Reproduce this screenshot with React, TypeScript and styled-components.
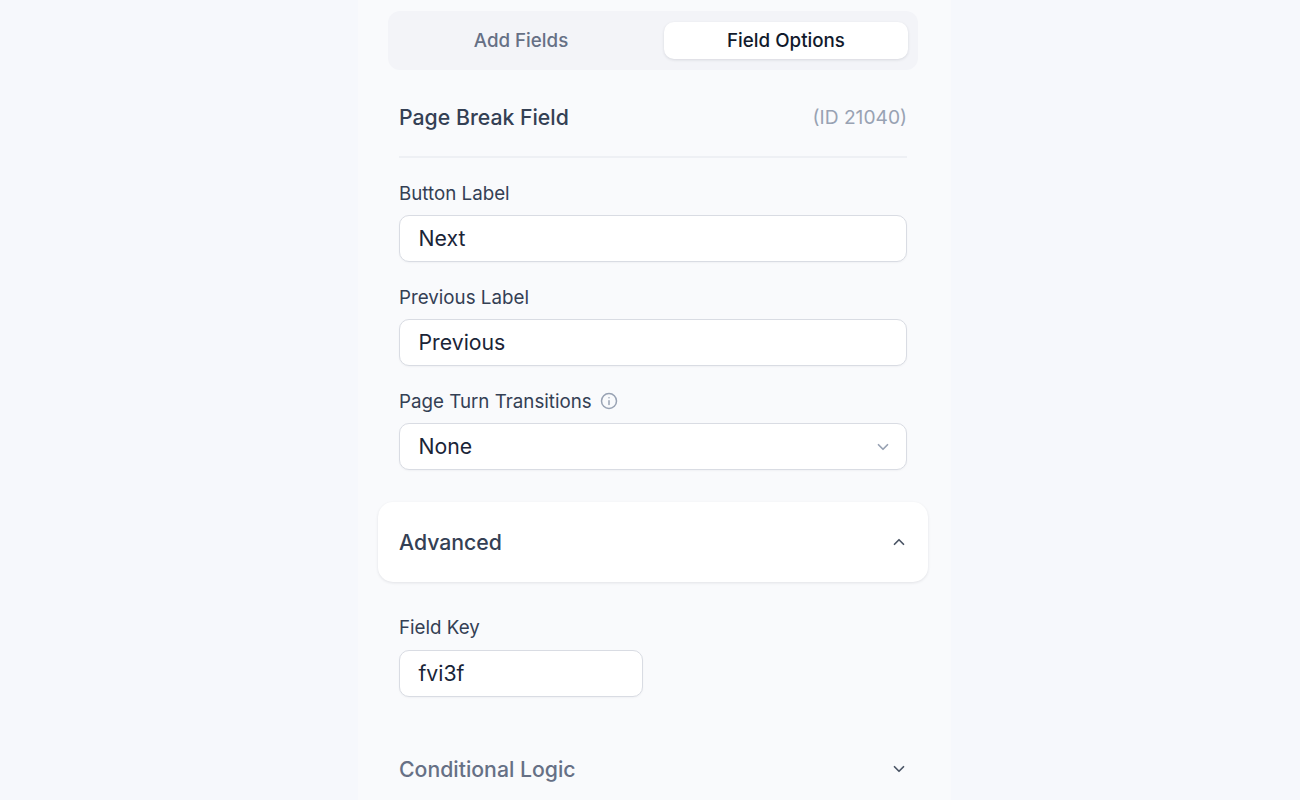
import React from "react";
import styled, { createGlobalStyle } from "styled-components";

const Global = createGlobalStyle`
  html, body { margin: 0; padding: 0; height: 100%; overflow: hidden; background: #f6f8fc; }
  body { font-family: Inter, "Liberation Sans", sans-serif; }
`;
const Page = styled.div`
  display: flex; justify-content: center; height: 800px; overflow: hidden; padding-left: 9px;
`;
const Panel = styled.div`
  width: 593px; height: 800px; box-sizing: border-box; background: #f9fafc;
  padding: 11px 30px 0; display: flex; flex-direction: column; overflow: hidden;
`;
const Tabs = styled.div`
  display: grid; grid-template-columns: 246px 244px; column-gap: 20px; height: 59px; box-sizing: border-box;
  padding: 11px 10px; background: #f3f4f8; border-radius: 12px; margin-right: 3px;
`;
const Tab = styled.div<{ $active?: boolean }>`
  display: flex; align-items: center; justify-content: center; border-radius: 10px;
  font-size: 18.75px; font-weight: 500; line-height: 37px;
  color: ${(p) => (p.$active ? "#111a2c" : "#667085")};
  background: ${(p) => (p.$active ? "#fff" : "transparent")};
  box-shadow: ${(p) => (p.$active ? "0 1px 3px rgba(16,24,40,.12)" : "none")};
`;
const Body = styled.div`
  padding: 0 14px 0 11px; display: flex; flex-direction: column;
`;
const Header = styled.div`
  display: flex; justify-content: space-between; align-items: center;
  height: 88px; padding-top: 8px; box-sizing: border-box; border-bottom: 2px solid #eef0f4; margin-bottom: 22px;
`;
const Title = styled.h2`
  margin: 0; font-size: 21.25px; font-weight: 500; color: #344054;
`;
const IdText = styled.span`
  font-size: 19.2px; font-weight: 400; color: #98a2b3;
`;
const Field = styled.div`
  display: flex; flex-direction: column; margin-bottom: 22px;
`;
const Label = styled.label`
  display: flex; align-items: center; gap: 8px; height: 26px; margin-bottom: 9px;
  font-size: 18.75px; font-weight: 400; color: #344054;
`;
const Control = styled.div<{ $width?: number }>`
  display: flex; align-items: center; justify-content: space-between;
  height: 47px; box-sizing: border-box; padding: 0 14px 0 18.5px;
  width: ${(p) => (p.$width ? `${p.$width}px` : "100%")};
  background: #fff; border: 1px solid #d9dce3; border-radius: 10px;
  box-shadow: 0 1px 2px rgba(16,24,40,.04);
  font-size: 21.25px; color: #1a2437;
`;
const Value = styled.span`
  padding-bottom: 2px;
`;
const Accordion = styled.div`
  display: flex; justify-content: space-between; align-items: center;
  height: 80px; margin: 10px -21px 0; padding: 0 20px 0 21px; box-sizing: border-box;
  background: #fff; border-radius: 15px; box-shadow: 0 1px 3px rgba(16,24,40,.1);
`;
const SectionTitle = styled.h3<{ $muted?: boolean }>`
  margin: 0; font-size: 21.25px; font-weight: 500;
  color: ${(p) => (p.$muted ? "#667085" : "#344054")};
`;
const FieldKey = styled(Field)`
  margin-top: 32px; margin-bottom: 0;
  label { margin-bottom: 10px; }
`;
const Collapsed = styled.div`
  display: flex; justify-content: space-between; align-items: center;
  margin-top: 52px; margin-right: -1px; height: 40px;
`;

const Chevron = ({ up, color, size = 18 }: { up?: boolean; color: string; size?: number }) => (
  <svg width={size} height={size} viewBox="0 0 24 24" fill="none" stroke={color} strokeWidth={2.3} strokeLinecap="round" strokeLinejoin="round">
    <path d={up ? "M6 15l6-6 6 6" : "M6 9l6 6 6-6"} />
  </svg>
);
const Info = () => (
  <svg width="18" height="18" viewBox="0 0 24 24" fill="none" stroke="#98a2b3" strokeWidth={2} strokeLinecap="round">
    <circle cx="12" cy="12" r="10" />
    <path d="M12 11.5v5M12 7.6v.1" />
  </svg>
);

export default function App() {
  return (
    <Page>
      <Global />
      <Panel>
        <Tabs>
          <Tab>Add Fields</Tab>
          <Tab $active>Field Options</Tab>
        </Tabs>
        <Body>
          <Header>
            <Title>Page Break Field</Title>
            <IdText>(ID 21040)</IdText>
          </Header>
          <Field>
            <Label>Button Label</Label>
            <Control><Value>Next</Value></Control>
          </Field>
          <Field>
            <Label>Previous Label</Label>
            <Control><Value>Previous</Value></Control>
          </Field>
          <Field>
            <Label>Page Turn Transitions <Info /></Label>
            <Control><Value>None</Value> <Chevron color="#98a2b3" /></Control>
          </Field>
          <Accordion>
            <SectionTitle>Advanced</SectionTitle>
            <Chevron up color="#4b5565" />
          </Accordion>
          <FieldKey>
            <Label>Field Key</Label>
            <Control $width={244}><Value>fvi3f</Value></Control>
          </FieldKey>
          <Collapsed>
            <SectionTitle $muted>Conditional Logic</SectionTitle>
            <Chevron color="#4b5565" />
          </Collapsed>
        </Body>
      </Panel>
    </Page>
  );
}
